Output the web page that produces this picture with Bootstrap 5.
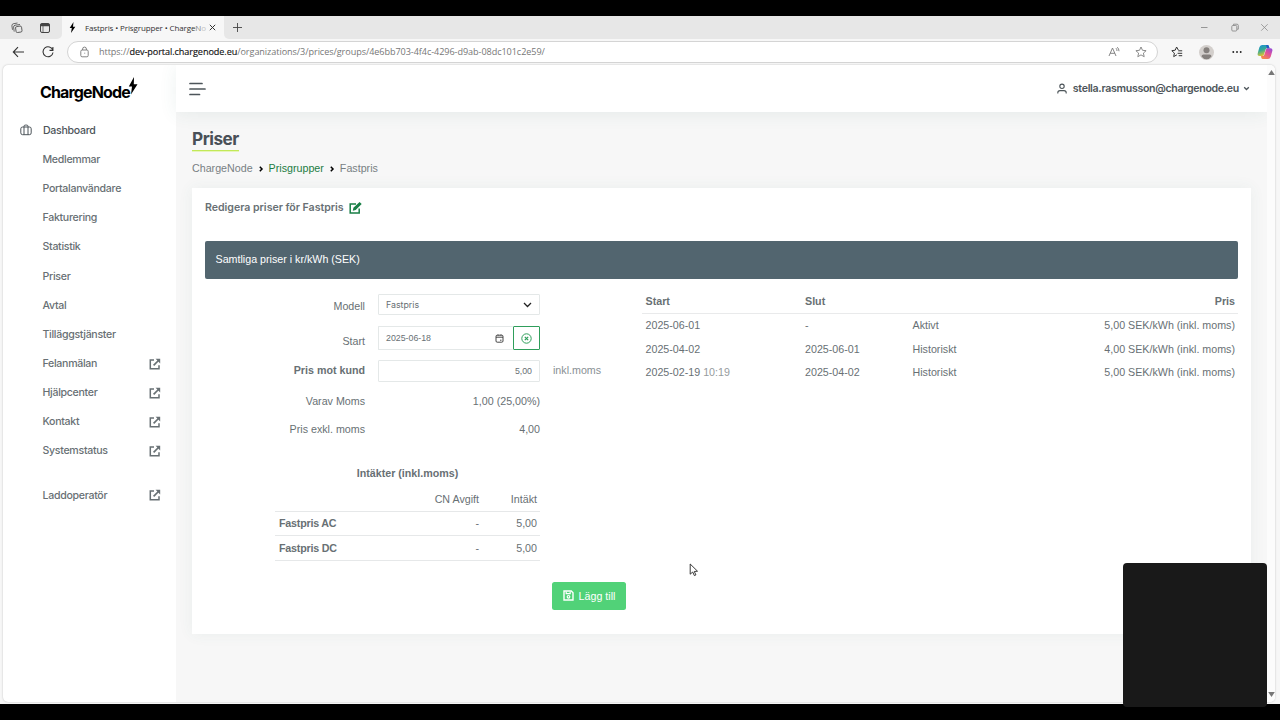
<!DOCTYPE html>
<html lang="sv">
<head>
<meta charset="utf-8">
<meta name="viewport" content="width=device-width, initial-scale=1">
<title>Fastpris • Prisgrupper • ChargeNode</title>
<link href="https://cdn.jsdelivr.net/npm/bootstrap@5.3.0/dist/css/bootstrap.min.css" rel="stylesheet">
<style>
html,body{height:720px;overflow:hidden}
body{background:#000;font-family:"Liberation Sans",Arial,sans-serif;font-size:10.7px;line-height:16px;color:#687074;padding-top:16px}
svg{display:block;flex:none;fill:none;stroke:currentColor}
.geo{font-family:Inter,"Liberation Sans",sans-serif}
.browser{height:688px;background:#f7f7f7}
.tabstrip{height:23px;background:#e7e7e7;color:#444}
.tabpane-left{width:62px;background:#e7e7e7;border-bottom-right-radius:5px;padding-left:11px;gap:16px}
.tabbar{background:#f7f7f7}
.tab-active{width:162px;background:#f7f7f7;padding-left:5px;font:8px/23px "Open Sans",sans-serif;color:#333}
.tab-title{width:118px;margin-left:7px;white-space:nowrap;letter-spacing:-.12px}
.tab-title .fade1{color:#888}
.tab-title .fade2{color:#c4c4c4}
.tab-rest{background:#e7e7e7;border-bottom-left-radius:5px;padding-left:8px}
.win-btns{gap:20px;padding-right:11px;color:#8c8c8c}
.win-btns svg:first-child{margin-right:1px}
.addr{height:26px;color:#333;padding-left:12px}
.urlbox{width:1091px;height:22px;margin-left:13px;border:1px solid #d4d4d4;border-radius:11px;background:#fff;padding:0 10px 0 11px;color:#777}
.url{font:9.1px/20px "Open Sans",sans-serif;color:#777;margin-left:9px;letter-spacing:-.07px;white-space:nowrap}
.url b{font-weight:400;color:#111;-webkit-text-stroke:.15px #111}
.view{height:637px;margin:0 5px 0 3px;background:#fff;border-radius:5px;box-shadow:0 0 2px #bbb;overflow:hidden}
.side{width:173px;padding-top:12px}
.brand{height:27px;margin-left:37px;color:#000;font:700 16px/31px Inter,sans-serif;letter-spacing:-.85px}
.brand svg{margin:0 0 0 -2px}
.menu{padding-top:11.5px;font-weight:500;font-size:10.6px;letter-spacing:-.3px}
.menu a{height:29.15px;padding-left:39.5px;padding-right:15.5px;color:#687074;text-decoration:none}
.menu a.top-item{height:30px;padding-left:17px;color:#4d555a}
.menu .top-item svg{margin-right:11px}
.menu a svg{margin-top:-1px}
.menu a.gap-above{margin-top:15.3px}
.topbar{height:47px;background:#fff;padding:0 17px 0 13px;box-shadow:0 2px 18px rgba(60,110,100,.09);color:#4d555a}
.mail{font-weight:600;font-size:10.6px;letter-spacing:-.31px;margin:0 4px 0 6px}
.main-bg{background:#f7f7f7;width:1091px}
.content{padding:15px 16px 0}
h1{font:700 17.2px/23px Inter,sans-serif;letter-spacing:-.5px;color:#495057;margin:0;height:24px}
.title-line{border-bottom:1px solid #c2e858;box-shadow:0 1px 0 #e6f6b8}
.crumbs{height:20px;margin-top:7px;gap:5px;color:#777f83}
.crumbs a{color:#1c7c43;text-decoration:none}
.crumbs svg{color:#000}
.panel{height:446px;margin-top:10px;background:#fff;padding:11px 13px 0;box-shadow:0 0 14px rgba(60,110,100,.07)}
.panel-title{height:17px;gap:5px;font-weight:600;font-size:10.6px;letter-spacing:-.02px}
.banner{height:38px;margin-top:24.5px;border-radius:2px;background:#52656f;color:#fff;padding:0 0 2px 10.5px}
.left{width:437px}
.frow{gap:13px}
.flabel{width:160px;text-align:right}
.field{width:162px}
.box{border:1px solid #e4e8e8;border-radius:1px;padding:0 7px;font-size:8.8px;background:#fff}
.clear{width:27px;border:1px solid #2f9e5b;color:#2f9e5b;border-radius:1px}
.income{width:265px;margin-left:70px}
.income b{letter-spacing:-.2px}
.grid3{display:grid;grid-template-columns:1fr 100px 58px;text-align:right;padding:0 3px 0 4px;border-bottom:1px solid #e6e8e9}
.grid4{display:grid;grid-template-columns:159.5px 107.500px 1fr 150px;padding:0 3px 0 3.5px}
.addbtn{width:74px;height:28px;margin:21px 0 0 347px;border-radius:2.5px;background:#51d278;color:#fff;gap:5px}
.track{width:8px;background:#fcfcfc;padding:4px 0;color:#777}
.cam{position:absolute;left:1122.5px;top:562.5px;width:144px;height:144px;border-radius:4px;background:#191919}
.pointer{position:absolute;left:688.5px;top:563px}
b{font-weight:700}
</style>
</head>
<body>
<svg width="0" height="0" class="position-absolute"><defs>
<g id="ext"><path d="M5 2H1.300v8.700H10V7.200" stroke-width="1.500"/><path d="M9.500 2.500L4.600 7.400" stroke-width="1.700"/><path d="M6.600 .8H11.200V5.400z" fill="currentColor" stroke="none"/></g>
</defs></svg>
<div class="browser">
  <div class="tabstrip d-flex">
    <div class="tabbar d-flex flex-fill">
      <div class="tabpane-left d-flex align-items-center">
        <svg width="12" height="12" viewBox="0 0 12 12" stroke-width=".8"><rect x="4.800" y="4.300" width="6" height="6" rx="1.300" transform="rotate(-8 7.800 7.300)"/><path d="M3.200 9.600L2.600 5.200Q2.500 3.600 4 3.200L9 2.500M1.500 7.800L.9 3.800Q.8 2.200 2.200 1.800L6.500 1"/></svg>
        <svg width="12" height="12" viewBox="0 0 12 12"><rect x="1.500" y="1.500" width="9" height="9" rx="1.500"/><path d="M1.500 3h9" stroke-width="2.500"/><path d="M4 4v6.500" stroke-width=".7"/></svg>
      </div>
      <div class="tab-active d-flex align-items-center">
        <svg width="11" height="11" viewBox="0 0 11 11" style="fill:#000;stroke:none"><path d="M6.500 0L2.700 6h2.100L4 11 8.300 4.800H6z"/></svg>
        <div class="tab-title">Fastpris • Prisgrupper • Charge<span class="fade1">N</span><span class="fade2">o</span></div>
        <svg width="7" height="7" viewBox="0 0 7 7" style="margin-left:6px"><path d="M.8.8l5.400 5.400M6.200.8L.8 6.200"/></svg>
      </div>
      <div class="tab-rest d-flex align-items-center justify-content-between flex-fill">
        <svg width="11" height="11" viewBox="0 0 11 11"><path d="M5.500 1v9M1 5.500h9" stroke-width=".9"/></svg>
        <div class="win-btns d-flex align-items-center">
          <svg width="9" height="9" viewBox="0 0 9 9"><path d="M0 4.500h6.500" stroke-width=".9"/></svg>
          <svg width="9" height="9" viewBox="0 0 9 9" stroke-width=".9"><rect x=".8" y="2.500" width="5" height="5.500" rx="1"/><path d="M2.500 2.500V1.200H6q1.300 0 1.300 1.300v3.700H6"/></svg>
          <svg width="9" height="9" viewBox="0 0 9 9"><path d="M1.200 1.200l6.500 6.500M7.700 1.200L1.200 7.700" stroke-width=".8"/></svg>
        </div>
      </div>
    </div>
  </div>
  <div class="addr d-flex align-items-center">
    <svg width="13" height="12" viewBox="0 0 13 12"><path d="M12 6H1.500M6 1.200L1.300 6 6 10.800" stroke-width="1.100"/></svg>
    <svg width="12" height="12" viewBox="0 0 12 12" style="margin-left:17px"><path d="M10.800 4.200A5 5 0 1 0 11 6.500M10.900 1v3.400H7.500" stroke-width="1.100"/></svg>
    <div class="urlbox d-flex align-items-center">
      <svg width="11" height="12" viewBox="0 0 11 12" stroke-width=".9"><rect x="1.800" y="4" width="7.400" height="6.800" rx="1.300"/><path d="M3.600 4V3a1.900 1.900 0 0 1 3.800 0v1M5.300 7.200h.9"/></svg>
      <div class="url flex-fill">https://<b>dev-portal.chargenode.eu</b>/organizations/3/prices/groups/4e6bb703-4f4c-4296-d9ab-08dc101c2e59/</div>
      <svg width="12" height="12" viewBox="0 0 12 12" stroke-width=".9"><path d="M1 10L4.500 2 8 10M2.200 7.300h4.600M8 2.200q1 1.200 1 2.800M9.300 1.200q1.700 1.600 1.700 4"/></svg>
      <svg width="12" height="12" viewBox="0 0 12 12" style="margin-left:15px" stroke-width=".85" stroke-linejoin="round"><path d="M6 1l1.500 3.300 3.600.4-2.700 2.400.8 3.600L6 8.900l-3.200 1.800.8-3.600L.9 4.700l3.600-.4z"/></svg>
    </div>
    <svg width="12" height="12" viewBox="0 0 12 12" style="margin-left:12.500px" stroke-linejoin="round"><path d="M7.300 4L5.600 1 4.200 4.200.8 4.700l2.600 2.400-.7 3.500 3.200-1.800M7.200 4.800h4M6.600 7.300h4.600M7.700 9.700h3.500"/></svg>
    <svg width="15" height="15" viewBox="0 0 15 15" style="margin-left:16.500px;stroke:none"><circle cx="7.500" cy="7.500" r="7.500" fill="#d3cfcc"/><circle cx="7.500" cy="5.300" r="3" fill="#85807d"/><path d="M2.500 11.500q0-2 2-2h6q2 0 2 2-2 2.800-5 2.800t-5-2.800z" fill="#85807d"/></svg>
    <svg width="10" height="4" viewBox="0 0 10 4" style="margin-left:18px;fill:#222;stroke:none"><circle cx="1.300" cy="2" r=".95"/><circle cx="5" cy="2" r=".95"/><circle cx="8.700" cy="2" r=".95"/></svg>
    <svg width="16" height="16" viewBox="0 0 16 16" style="margin-left:15px;stroke:none"><defs><linearGradient id="cpa" x1="0" y1="0" x2=".4" y2="1"><stop stop-color="#168ddd"/><stop offset=".5" stop-color="#35a995"/><stop offset="1" stop-color="#e6c72d"/></linearGradient><linearGradient id="cpb" x1="1" y1="0" x2=".3" y2="1"><stop stop-color="#8a4de0"/><stop offset=".5" stop-color="#e0509c"/><stop offset="1" stop-color="#f58a4b"/></linearGradient></defs><path d="M5 1h5.500q1 0 1.300 1l.7 2.200H10q-1 0-1.400 1.200L7 10.500q-.5 1.500-2 1.500H2.500Q0 12 .8 9l1.500-5.500Q3 1 5 1z" fill="url(#cpa)"/><path d="M11 15H6q-1.300 0-1.600-1L4 12h1.500Q7 12 7.400 10.500L9 5.400q.4-1.200 1.500-1.200h3q2.500 0 1.800 2.800l-1.500 5.500Q13 15 11 15z" fill="url(#cpb)"/><path d="M9 1h1.500q1 0 1.300 1l.7 2.200H10z" fill="#2458c7"/></svg>
  </div>
  <div class="view d-flex">
    <aside class="side flex-shrink-0">
      <div class="brand d-flex"><span>ChargeNode</span><svg width="10" height="18" viewBox="0 0 10 18" style="fill:#000;stroke:none"><path d="M6 0L.8 9.500H4L3 17.500 9.500 7.300H5.800z"/></svg></div>
      <nav class="menu geo">
        <a href="#" class="top-item d-flex align-items-center"><svg width="12" height="12" viewBox="0 0 12 12" stroke-width="1"><rect x=".8" y="3" width="10.400" height="7.700" rx="1.800"/><path d="M4 10.700V2.300q0-1.200 1.200-1.200h1.600Q8 1.100 8 2.300v8.400"/></svg><span>Dashboard</span></a>
        <a href="#" class="d-flex align-items-center">Medlemmar</a>
        <a href="#" class="d-flex align-items-center">Portalanvändare</a>
        <a href="#" class="d-flex align-items-center">Fakturering</a>
        <a href="#" class="d-flex align-items-center">Statistik</a>
        <a href="#" class="d-flex align-items-center">Priser</a>
        <a href="#" class="d-flex align-items-center">Avtal</a>
        <a href="#" class="d-flex align-items-center">Tilläggstjänster</a>
        <a href="#" class="d-flex align-items-center justify-content-between">Felanmälan<svg width="12" height="12"><use href="#ext"/></svg></a>
        <a href="#" class="d-flex align-items-center justify-content-between">Hjälpcenter<svg width="12" height="12"><use href="#ext"/></svg></a>
        <a href="#" class="d-flex align-items-center justify-content-between">Kontakt<svg width="12" height="12"><use href="#ext"/></svg></a>
        <a href="#" class="d-flex align-items-center justify-content-between">Systemstatus<svg width="12" height="12"><use href="#ext"/></svg></a>
        <a href="#" class="gap-above d-flex align-items-center justify-content-between">Laddoperatör<svg width="12" height="12"><use href="#ext"/></svg></a>
      </nav>
    </aside>
    <div class="main-bg flex-shrink-0">
      <header class="topbar d-flex align-items-center justify-content-between">
        <svg width="17" height="14" viewBox="0 0 17 14" stroke-width="1.700" stroke-linecap="round"><path d="M1 1.500h12M1 7h15M1 12.500h9.500"/></svg>
        <div class="d-flex align-items-center geo">
          <svg width="10" height="11" viewBox="0 0 10 11" stroke-width="1.100"><circle cx="5" cy="3.300" r="2.200"/><path d="M.8 10.500V9.800Q.8 7.600 3 7.600h4q2.200 0 2.200 2.200v.7"/></svg>
          <span class="mail">stella.rasmusson@chargenode.eu</span>
          <svg width="7" height="5" viewBox="0 0 7 5" stroke-width="1.300"><path d="M1.200 1.200l2.300 2.300 2.300-2.300"/></svg>
        </div>
      </header>
      <main class="content">
        <div class="d-flex"><h1 class="title-line">Priser</h1></div>
        <nav class="crumbs d-flex align-items-center"><span>ChargeNode</span><svg width="6" height="7" viewBox="0 0 6 7" stroke-width="1.500"><path d="M1.800 1.800L4 4 1.800 6.300"/></svg><a href="#">Prisgrupper</a><svg width="6" height="7" viewBox="0 0 6 7" stroke-width="1.500"><path d="M1.800 1.800L4 4 1.800 6.300"/></svg><span>Fastpris</span></nav>
        <section class="panel">
          <div class="panel-title geo d-flex align-items-center"><span>Redigera priser för Fastpris</span><svg width="13" height="12" viewBox="0 0 13 12" style="color:#187f46"><path d="M7 2H1.200v9h9V6.500" stroke-width="1.500"/><path d="M3.800 8.700l.6-2.900L10.600.1l2.100 2L6.700 8.100z" fill="currentColor" stroke="none"/></svg></div>
          <div class="banner d-flex align-items-center">Samtliga priser i kr/kWh (SEK)</div>
          <div class="d-flex">
            <div class="left flex-shrink-0">
              <div class="frow d-flex align-items-center" style="height:21px;margin-top:15.500px"><div class="flabel" style="padding-top:2px">Modell</div><div class="field box d-flex align-items-center justify-content-between h-100"><span class="geo">Fastpris</span><svg width="9" height="6" viewBox="0 0 9 6" stroke-width="1.300" style="color:#222"><path d="M1 1l3.500 3.500L8 1"/></svg></div></div>
              <div class="frow d-flex align-items-center" style="height:24px;margin-top:11px"><div class="flabel" style="padding-top:5px">Start</div><div class="field d-flex h-100"><div class="box flex-fill border-end-0 d-flex align-items-center justify-content-between"><span>2025-06-18</span><svg width="9" height="9" viewBox="0 0 9 9" stroke-width=".9" style="color:#333;margin-right:2px"><rect x="1" y="1.200" width="7" height="7" rx="1.200"/><path d="M1 3.200h7M3 .5v1M6 .5v1M5 6.200h1.500"/></svg></div><div class="clear d-flex align-items-center justify-content-center"><svg width="11" height="11" viewBox="0 0 11 11"><circle cx="5.500" cy="5.500" r="4.700"/><path d="M3.800 3.800l3.400 3.400M7.200 3.800L3.800 7.200" stroke-width="1.200"/></svg></div></div></div>
              <div class="frow d-flex align-items-center" style="height:22px;margin-top:10px"><div class="flabel" style="padding-bottom:2px"><b>Pris mot kund</b></div><div class="field box d-flex align-items-center justify-content-end h-100">5,00</div><span style="color:#899094;padding-bottom:2px">inkl.moms</span></div>
              <div class="frow d-flex align-items-center" style="height:28px;margin-top:5px"><div class="flabel">Varav Moms</div><div class="field text-end">1,00 (25,00%)</div></div>
              <div class="frow d-flex align-items-center" style="height:28px"><div class="flabel">Pris exkl. moms</div><div class="field text-end">4,00</div></div>
              <div class="income">
                <div class="text-center fw-bold" style="margin-top:22px">Intäkter (inkl.moms)</div>
                <div class="grid3" style="height:30.500px;padding-top:10px"><span></span><span>CN Avgift</span><span>Intäkt</span></div>
                <div class="grid3 align-items-center" style="height:24.500px"><b class="text-start">Fastpris AC</b><span>-</span><span>5,00</span></div>
                <div class="grid3 align-items-center" style="height:24.500px"><b class="text-start">Fastpris DC</b><span>-</span><span>5,00</span></div>
              </div>
              <button class="addbtn border-0 d-flex align-items-center justify-content-center p-0"><svg width="11" height="11" viewBox="0 0 11 11"><path d="M1 1h7.300L10 2.700V10H1z" stroke-width="1.400"/><path d="M3.200 1.500v2.200h4V1.500" stroke-width="1.200"/><circle cx="5.500" cy="6.800" r="1.300" stroke-width="1.200"/></svg><span>Lägg till</span></button>
            </div>
            <div class="flex-fill" style="padding-top:10px">
              <div class="grid4 align-items-center" style="height:25px;border-bottom:1px solid #e9eaeb"><b>Start</b><b>Slut</b><span></span><b class="text-end">Pris</b></div>
              <div class="grid4 align-items-center" style="height:23.500px"><span>2025-06-01</span><span>-</span><span>Aktivt</span><span class="text-end">5,00 SEK/kWh (inkl. moms)</span></div>
              <div class="grid4 align-items-center" style="height:23.500px"><span>2025-04-02</span><span>2025-06-01</span><span>Historiskt</span><span class="text-end">4,00 SEK/kWh (inkl. moms)</span></div>
              <div class="grid4 align-items-center" style="height:23.500px"><span>2025-02-19 <span style="color:#969b9e">10:19</span></span><span>2025-04-02</span><span>Historiskt</span><span class="text-end">5,00 SEK/kWh (inkl. moms)</span></div>
            </div>
          </div>
        </section>
      </main>
    </div>
    <div class="track d-flex flex-column justify-content-between align-items-center">
      <svg width="7" height="7" viewBox="0 0 7 7" style="fill:#777;stroke:none"><path d="M3.500 1L6.800 6H.2z"/></svg>
      <svg width="7" height="7" viewBox="0 0 7 7" style="fill:#777;stroke:none"><path d="M3.500 6L6.800 1H.2z"/></svg>
    </div>
  </div>
</div>
<div class="cam"></div>
<svg class="pointer" width="10" height="14" viewBox="0 0 10 14"><path d="M1.200 1v10.200l2.500-2.200 1.700 3.600 1.500-.7L5.300 8.500l3.200-.3z" fill="#fff" stroke="#222" stroke-width=".9"/></svg>
<script src="https://cdn.jsdelivr.net/npm/bootstrap@5.3.0/dist/js/bootstrap.bundle.min.js"></script>
</body>
</html>
